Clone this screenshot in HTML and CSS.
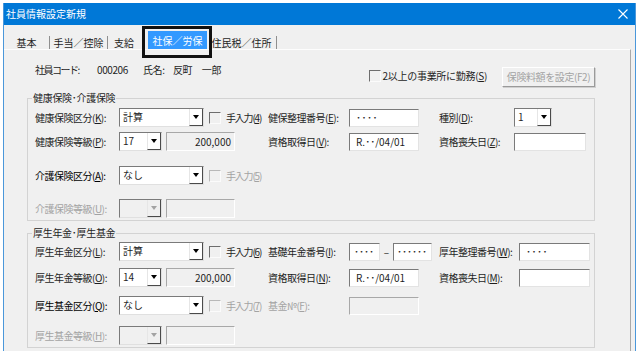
FILE: index.html
```html
<!DOCTYPE html>
<html lang="ja">
<head>
    <meta charset="UTF-8">
    <meta name="viewport" content="width=device-width, initial-scale=1.0">
    <title>社員情報設定新規</title>
    <link rel="stylesheet" href="styles.css">
</head>
<body>
<div class="window">
    <div class="titlebar">
        <span class="title">社員情報設定新規</span>
        <svg class="close" width="10" height="10" viewBox="0 0 10 10"><path d="M0.5 0.5 L9.5 9.5 M9.5 0.5 L0.5 9.5" stroke="#fff" stroke-width="1.1" fill="none"/></svg>
    </div>

    <div class="tabs">
        <div class="tab tab-basic">基本</div>
        <div class="tab tab-allow">手当／控除</div>
        <div class="tab tab-pay">支給</div>
        <div class="tab tab-ins">社保／労保</div>
        <div class="tab tab-res">住民税／住所</div>
    </div>

    <div class="panel">
        <div class="head">
            <div class="emp">
                <span class="emp-label">社員コード:</span>
                <span class="emp-code">000206</span>
                <span class="emp-name-label">氏名:</span>
                <span>反町　一郎</span>
            </div>
            <div class="check check-multi"><span class="check-box"></span>2以上の事業所に勤務(<u>S</u>)</div>
            <div class="btn off">保険料額を設定(F2)</div>
        </div>

        <!-- 健康保険・介護保険 -->
        <fieldset class="group g1">
            <legend>健康保険･介護保険</legend>
            <div class="row">
                <span class="lbl">健康保険区分(<u>K</u>):</span>
                <div class="combo w-wide"><span class="combo-text">計算</span><span class="combo-btn"></span></div>
                <div class="check"><span class="check-box"></span>手入力(<u>4</u>)</div>
                <span class="lbl">健保整理番号(<u>E</u>):</span>
                <div class="field w-70 dots">････</div>
                <span class="lbl">種別(<u>D</u>):</span>
                <div class="combo w-kind"><span class="combo-text">1</span><span class="combo-btn"></span></div>
            </div>
            <div class="row r-5">
                <span class="lbl">健康保険等級(<u>P</u>):</span>
                <div class="grade">
                    <div class="combo w-num"><span class="combo-text">17</span><span class="combo-btn"></span></div>
                    <div class="box">200,000</div>
                </div>
                <span class="lbl">資格取得日(<u>V</u>):</span>
                <div class="field w-70">R.･･/04/01</div>
                <span class="lbl">資格喪失日(<u>Z</u>):</span>
                <div class="field w-72"></div>
            </div>
            <div class="row r-15">
                <span class="lbl dark">介護保険区分(<u>A</u>):</span>
                <div class="combo w-wide"><span class="combo-text">なし</span><span class="combo-btn"></span></div>
                <div class="check off"><span class="check-box"></span>手入力(<u>5</u>)</div>
            </div>
            <div class="row r-14">
                <span class="lbl off">介護保険等級(<u>U</u>):</span>
                <div class="grade">
                    <div class="combo w-num off"><span class="combo-text"></span><span class="combo-btn"></span></div>
                    <div class="box"></div>
                </div>
            </div>
        </fieldset>

        <!-- 厚生年金・厚生基金 -->
        <fieldset class="group g2">
            <legend>厚生年金･厚生基金</legend>
            <div class="row">
                <span class="lbl">厚生年金区分(<u>L</u>):</span>
                <div class="combo w-wide"><span class="combo-text">計算</span><span class="combo-btn"></span></div>
                <div class="check"><span class="check-box"></span>手入力(<u>6</u>)</div>
                <span class="lbl">基礎年金番号(<u>I</u>):</span>
                <div class="pair">
                    <div class="field w-31 dots">････</div>
                    <span class="dash">–</span>
                    <div class="field w-39 dots">･･････</div>
                </div>
                <span class="lbl">厚年整理番号(<u>W</u>):</span>
                <div class="field w-71 dots">････</div>
            </div>
            <div class="row r-7">
                <span class="lbl">厚生年金等級(<u>O</u>):</span>
                <div class="grade">
                    <div class="combo w-num"><span class="combo-text">14</span><span class="combo-btn"></span></div>
                    <div class="box">200,000</div>
                </div>
                <span class="lbl">資格取得日(<u>N</u>):</span>
                <div class="field w-70">R.･･/04/01</div>
                <span class="lbl">資格喪失日(<u>M</u>):</span>
                <div class="field w-71"></div>
            </div>
            <div class="row r-9">
                <span class="lbl dark">厚生基金区分(<u>Q</u>):</span>
                <div class="combo w-wide"><span class="combo-text">なし</span><span class="combo-btn"></span></div>
                <div class="check off"><span class="check-box"></span>手入力(<u>7</u>)</div>
                <span class="lbl off">基金№(<u>F</u>):</span>
                <div class="field w-70 off"></div>
            </div>
            <div class="row r-11">
                <span class="lbl off">厚生基金等級(<u>H</u>):</span>
                <div class="grade">
                    <div class="combo w-num off"><span class="combo-text"></span><span class="combo-btn"></span></div>
                    <div class="box"></div>
                </div>
            </div>
        </fieldset>
    </div>
</div>
</body>
</html>
```

FILE: styles.css
```css
* {
    box-sizing: border-box;
}

html, body {
    margin: 0;
    height: 100%;
    overflow: hidden;
    background: #fff;
}

body {
    font-family: "Noto Sans CJK JP", "Noto Sans", sans-serif;
    font-size: 10px;
    line-height: 14px;
    color: #1e1e1e;
}

u {
    text-underline-offset: 1px;
}

/* window frame */
.window {
    margin: 3px 0 0 3px;
    width: 633px;
    height: 348px;
    background: #f0f0f0;
    border-left: 1px solid #4a97da;
    border-right: 1px solid #4a97da;
    overflow: hidden;
}

.titlebar {
    height: 22px;
    margin: 0 -1px;
    padding: 0 8px 0 3px;
    background: #0078d7;
    color: #fff;
    display: flex;
    align-items: center;
    justify-content: space-between;
}

/* tabs (flat buttons) */
.tabs {
    display: flex;
    align-items: flex-end;
    height: 24px;
}

.tab {
    height: 13px;
    line-height: 13px;
    text-align: center;
    border-right: 1px solid #8f8f8f;
}

.tab-basic { width: 46px; }
.tab-allow { width: 58px; }
.tab-pay { width: 32px; border-right: none; }
.tab-res { width: 70px; }

.tab-ins {
    width: 59px;
    margin-left: 8px;
    height: 18px;
    line-height: 19px;
    background: #3399ff;
    color: #fff;
    border-right: none;
    position: relative;
}

/* annotation frame around the current tab */
.tab-ins::after {
    content: "";
    position: absolute;
    left: -6px;
    top: -5px;
    right: -5px;
    bottom: -9px;
    border: 3px solid #111;
    z-index: 2;
}

.panel {
    width: 627px;
    height: 302px;
    border-top: 1px solid #fdfdfd;
    border-right: 1px solid #a9a9a9;
}

/* employee line */
.head {
    display: flex;
    align-items: flex-start;
    height: 41px;
    padding: 13px 35px 0 31px;
}

.emp {
    display: flex;
    letter-spacing: -0.4px;
}

.emp-label { width: 62px; letter-spacing: -1.5px; }
.emp-code { width: 46px; }
.emp-name-label { width: 30px; }

.check-multi {
    margin-left: auto;
    margin-top: 6px;
    letter-spacing: -0.3px;
}

.check-multi .check-box {
    margin-right: 2px;
}

.btn {
    margin-left: 15px;
    margin-top: 4px;
    width: 93px;
    height: 20px;
    line-height: 18px;
    text-align: center;
    letter-spacing: -0.4px;
    border: 1px solid;
    border-color: #fff #9a9a9a #9a9a9a #fff;
    box-shadow: 1px 1px 0 #d0d0d0;
}

.btn.off {
    color: #a3a3a3;
}

/* group boxes */
.group {
    margin: 0 35px 0 23px;
    padding: 3px 0 2px 7px;
    border: 1px solid #d3d3d3;
    min-width: 0;
}

.g2 {
    margin-top: 5px;
    padding-top: 2px;
}

legend {
    margin-left: -3px;
    padding: 0 1px;
    line-height: 14px;
    letter-spacing: -0.3px;
}

.row {
    display: grid;
    grid-template-columns: 84px 90px 59px 81px 90px 75px auto;
    align-items: center;
    height: 19px;
}

.g2 .row {
    grid-template-columns: 84px 90px 59px 81px 90px 80px auto;
}

.r-5 { margin-top: 5px; }
.r-7 { margin-top: 7px; }
.r-9 { margin-top: 9px; }
.r-11 { margin-top: 11px; }
.r-14 { margin-top: 14px; }
.r-15 { margin-top: 15px; }

.lbl {
    white-space: nowrap;
    letter-spacing: -0.5px;
}

.lbl.dark {
    color: #000;
}

.off,
.lbl.off {
    color: #a3a3a3;
}

/* combo boxes */
.combo {
    display: flex;
    height: 19px;
    background: #fff;
    border: 1px solid;
    border-color: #7a7a7a #e0e0e0 #e0e0e0 #7a7a7a;
}

.combo-text {
    flex: 1;
    padding-left: 3px;
    line-height: 16px;
    white-space: nowrap;
}

.combo-btn {
    width: 14px;
    display: flex;
    align-items: center;
    justify-content: center;
    border-left: 1px solid #e6e6e6;
    border-right: 1px solid #4a4a4a;
    border-bottom: 1px solid #4a4a4a;
}

.combo-btn::before {
    content: "";
    border-left: 3px solid transparent;
    border-right: 3px solid transparent;
    border-top: 4px solid #000;
}

.combo.off {
    background: #f0f0f0;
}

.combo.off .combo-btn::before {
    border-top-color: #a3a3a3;
}

.w-wide { width: 85px; }
.w-num { width: 43px; }
.w-kind { width: 38px; }

.grade {
    grid-column: span 2;
    display: flex;
    gap: 4px;
}

.box {
    width: 69px;
    height: 19px;
    border: 1px solid;
    border-color: #a8a8a8 #fff #fff #a8a8a8;
    text-align: right;
    padding-right: 3px;
    line-height: 17px;
}

/* text boxes */
.field {
    height: 18px;
    background: #fff;
    border: 1px solid;
    border-color: #7a7a7a #e3e3e3 #e3e3e3 #7a7a7a;
    padding-left: 6px;
    line-height: 16px;
    white-space: nowrap;
    overflow: hidden;
}

.field.off {
    background: #f0f0f0;
    border-color: #a8a8a8 #fff #fff #a8a8a8;
}

.dots {
    letter-spacing: 0.5px;
}

.w-31 { width: 31px; padding-left: 4px; letter-spacing: 0; }
.w-39 { width: 39px; padding-left: 3px; letter-spacing: 0; }
.w-70 { width: 70px; }
.w-71 { width: 71px; }
.w-72 { width: 72px; }

.pair {
    display: flex;
    align-items: center;
}

.dash {
    width: 13px;
    text-align: center;
}

/* check boxes */
.check {
    display: flex;
    align-items: center;
    white-space: nowrap;
}

.row .check {
    letter-spacing: -1.2px;
}

.check-box {
    width: 12px;
    height: 12px;
    margin-right: 5px;
    border: 1px solid;
    border-color: #6d6d6d #fbfbfb #fbfbfb #6d6d6d;
}

.check.off .check-box {
    border-color: #b8b8b8 #fbfbfb #fbfbfb #b8b8b8;
}
```
